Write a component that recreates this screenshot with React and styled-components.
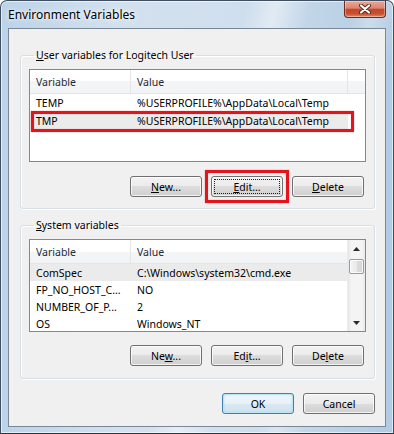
import React from 'react';
import styled, { createGlobalStyle, css } from 'styled-components';

const Global = createGlobalStyle`
  html, body { margin: 0; padding: 0; background: #ffffff; overflow: hidden; }
  body { font-family: "Noto Sans", "Liberation Sans", sans-serif; }
  #root { width: 394px; height: 434px; }
`;

const Window = styled.div`
  box-sizing: border-box;
  width: 394px;
  height: 434px;
  display: flex;
  flex-direction: column;
  padding: 0 7px 6px;
  border: 1px solid #3f4f61;
  border-bottom-color: #27333f;
  border-radius: 7px 7px 0 0;
  background:
    linear-gradient(103deg, rgba(255,255,255,0) 0%, rgba(255,255,255,0) 50%, rgba(255,255,255,0.45) 56%, rgba(255,255,255,0) 63%, rgba(255,255,255,0) 72%, rgba(255,255,255,0.3) 76%, rgba(255,255,255,0) 82%),
    linear-gradient(90deg, #bcd3e8 0%, #d3e1ee 30%, #d0dfed 60%, #b2cbe2 100%);
  box-shadow: inset 0 0 0 1px rgba(255,255,255,0.6);
`;

const TitleBar = styled.div`
  flex: none;
  height: 27px;
  display: flex;
  justify-content: space-between;
  align-items: flex-start;
`;

const Title = styled.div`
  align-self: center;
  font-size: 12px;
  color: #000;
  text-shadow: 0 0 6px rgba(255,255,255,0.95), 0 0 3px rgba(255,255,255,0.9);
`;

const CloseButton = styled.div`
  box-sizing: border-box;
  width: 42px;
  height: 17px;
  border: 1px solid #6a2a1c;
  border-top: none;
  border-radius: 0 0 4px 4px;
  background: linear-gradient(180deg, #eaa898 0%, #da8571 45%, #c6452b 52%, #c8502f 80%, #e08a6c 100%);
  box-shadow: inset 0 0 0 1px rgba(255,255,255,0.35);
  display: flex;
  align-items: center;
  justify-content: center;
`;

const Client = styled.div`
  flex: 1;
  min-height: 0;
  background: #f0f0f0;
  border: 1px solid #7a8794;
  padding: 0 10px 0 11px;
  display: flex;
  flex-direction: column;
  font-size: 10.5px;
  color: #000;
`;

const GroupBox = styled.fieldset`
  margin: ${p => p.$top}px 0 0;
  padding: 7px 8px ${p => p.$bottom}px;
  border: 1px solid #d5dfe5;
  border-radius: 3px;
  box-shadow: inset 1px 1px 0 #ffffff, 1px 1px 0 #ffffff;
  min-width: 0;
  display: flex;
  flex-direction: column;
`;

const Legend = styled.legend`
  margin-left: 5px;
  padding: 0 2px;
  height: 14px;
  line-height: 14px;
  font-size: 10.5px;
`;

const ListView = styled.div`
  box-sizing: border-box;
  height: ${p => p.$h}px;
  border: 1px solid #828790;
  background: #fff;
  display: flex;
  overflow: hidden;
`;

const ListBody = styled.div`
  flex: 1;
  min-width: 0;
  display: flex;
  flex-direction: column;
`;

const HeaderRow = styled.div`
  flex: none;
  display: grid;
  grid-template-columns: 101px 217px 1fr;
  height: 24px;
  background: linear-gradient(180deg, #ffffff 0%, #ffffff 50%, #f4f5f7 50%, #f2f3f5 100%);
  border-bottom: 1px solid #e3e5e8;
  box-sizing: border-box;
`;

const HeaderCell = styled.div`
  display: flex;
  align-items: center;
  padding-left: 6px;
  border-right: 1px solid #e3e5e8;
  color: #1e2a38;
  &:last-child { border-right: none; }
`;

const Row = styled.div`
  position: relative;
  flex: none;
  display: grid;
  grid-template-columns: 101px 217px 1fr;
  height: ${p => p.$h}px;
  ${p => p.$marked && css`
    &::after {
      content: "";
      position: absolute;
      left: 1px;
      right: 11px;
      top: -1px;
      bottom: -2px;
      border: 3px solid #e3141c;
      box-shadow: 0 0 1px rgba(227,20,28,0.6), inset 0 0 1px rgba(227,20,28,0.6);
    }
  `}
`;

const Cell = styled.div`
  display: flex;
  align-items: center;
  padding-left: 6px;
  white-space: nowrap;
  overflow: hidden;
  background: ${p => (p.$selected ? '#ebebeb' : 'transparent')};
`;

const ScrollBar = styled.div`
  flex: none;
  width: 17px;
  display: flex;
  flex-direction: column;
  background: linear-gradient(90deg, #e6e6e6 0%, #f4f4f4 20%, #f4f4f4 80%, #e8e8e8 100%);
  border-left: 1px solid #ececec;
`;

const ArrowBox = styled.div`
  flex: none;
  height: 17px;
  display: flex;
  align-items: center;
  justify-content: center;
`;

const Track = styled.div`
  flex: 1;
  padding: 2px 1px 0;
`;

const Thumb = styled.div`
  box-sizing: border-box;
  height: 15px;
  border: 1px solid #9b9b9b;
  border-radius: 2px;
  background: linear-gradient(90deg, #f3f3f3 0%, #e9e9e9 50%, #dcdcdc 51%, #d6d6d6 100%);
  box-shadow: inset 0 0 0 1px rgba(255,255,255,0.8);
`;

const ButtonRow = styled.div`
  display: flex;
  justify-content: flex-end;
  gap: 9px;
  margin-top: ${p => p.$top}px;
  padding-right: ${p => p.$right}px;
`;

const Button = styled.button`
  position: relative;
  box-sizing: border-box;
  width: 72px;
  height: 21px;
  padding: 0;
  font-family: inherit;
  font-size: 10.5px;
  color: #000;
  border: 1px solid #707070;
  border-radius: 3px;
  background: linear-gradient(180deg, #f2f2f2 0%, #ebebeb 50%, #dddddd 50%, #cfcfcf 100%);
  box-shadow: inset 0 0 0 1px rgba(255,255,255,0.75);
  u { text-underline-offset: 1px; }
  ${p => p.$default && css`
    border-color: #3c7fb1;
    background: linear-gradient(180deg, #f1f6f9 0%, #e8f1f7 50%, #d9e8f2 50%, #d2e3ef 100%);
    box-shadow: inset 0 0 0 1px #bfe5f7, inset 0 0 3px #7fcdef;
  `}
  ${p => p.$focused && css`
    &::before {
      content: "";
      position: absolute;
      inset: 2px;
      border: 1px dotted #222;
    }
  `}
  ${p => p.$marked && css`
    &::after {
      content: "";
      position: absolute;
      inset: -7px;
      border: 3px solid #e3141c;
      box-shadow: 0 0 1px rgba(227,20,28,0.6), inset 0 0 1px rgba(227,20,28,0.6);
    }
  `}
`;

const CloseX = () => (
  <svg width="14" height="10" viewBox="0 0 14 10">
    <path d="M3 1.5 L11 8.5 M11 1.5 L3 8.5" stroke="#5a2418" strokeWidth="4" strokeLinecap="round" />
    <path d="M3 1.5 L11 8.5 M11 1.5 L3 8.5" stroke="#ffffff" strokeWidth="2.2" strokeLinecap="round" />
  </svg>
);

const Arrow = ({ up }) => (
  <svg width="7" height="4" viewBox="0 0 7 4">
    <path d={up ? 'M0 4 L3.5 0 L7 4 Z' : 'M0 0 L7 0 L3.5 4 Z'} fill="#2b2b2b" />
  </svg>
);

const userVars = [
  { name: 'TEMP', value: '%USERPROFILE%\\AppData\\Local\\Temp' },
  { name: 'TMP', value: '%USERPROFILE%\\AppData\\Local\\Temp', selected: true, marked: true },
];

const systemVars = [
  { name: 'ComSpec', value: 'C:\\Windows\\system32\\cmd.exe', selected: true },
  { name: 'FP_NO_HOST_C...', value: 'NO' },
  { name: 'NUMBER_OF_P...', value: '2' },
  { name: 'OS', value: 'Windows_NT' },
];

const VarList = ({ rows, rowHeight, height, scroll }) => (
  <ListView $h={height}>
    <ListBody>
      <HeaderRow>
        <HeaderCell>Variable</HeaderCell>
        <HeaderCell>Value</HeaderCell>
        <HeaderCell />
      </HeaderRow>
      {rows.map(r => (
        <Row key={r.name} $h={rowHeight} $marked={r.marked}>
          <Cell $selected={r.selected}>{r.name}</Cell>
          <Cell $selected={r.selected}>{r.value}</Cell>
          <Cell />
        </Row>
      ))}
    </ListBody>
    {scroll && (
      <ScrollBar>
        <ArrowBox><Arrow up /></ArrowBox>
        <Track><Thumb /></Track>
        <ArrowBox><Arrow /></ArrowBox>
      </ScrollBar>
    )}
  </ListView>
);

export default function App() {
  return (
    <>
      <Global />
      <Window>
        <TitleBar>
          <Title>Environment Variables</Title>
          <CloseButton><CloseX /></CloseButton>
        </TitleBar>
        <Client>
          <GroupBox $top={19} $bottom={11}>
            <Legend><u>U</u>ser variables for Logitech User</Legend>
            <VarList rows={userVars} rowHeight={18} height={93} />
            <ButtonRow $top={14} $right={2}>
              <Button><u>N</u>ew...</Button>
              <Button $focused $marked><u>E</u>dit...</Button>
              <Button><u>D</u>elete</Button>
            </ButtonRow>
          </GroupBox>
          <GroupBox $top={9} $bottom={12}>
            <Legend><u>S</u>ystem variables</Legend>
            <VarList rows={systemVars} rowHeight={17} height={93} scroll />
            <ButtonRow $top={13} $right={2}>
              <Button>Ne<u>w</u>...</Button>
              <Button>Ed<u>i</u>t...</Button>
              <Button>De<u>l</u>ete</Button>
            </ButtonRow>
          </GroupBox>
          <ButtonRow $top={14} $right={0}>
            <Button $default>OK</Button>
            <Button>Cancel</Button>
          </ButtonRow>
        </Client>
      </Window>
    </>
  );
}
